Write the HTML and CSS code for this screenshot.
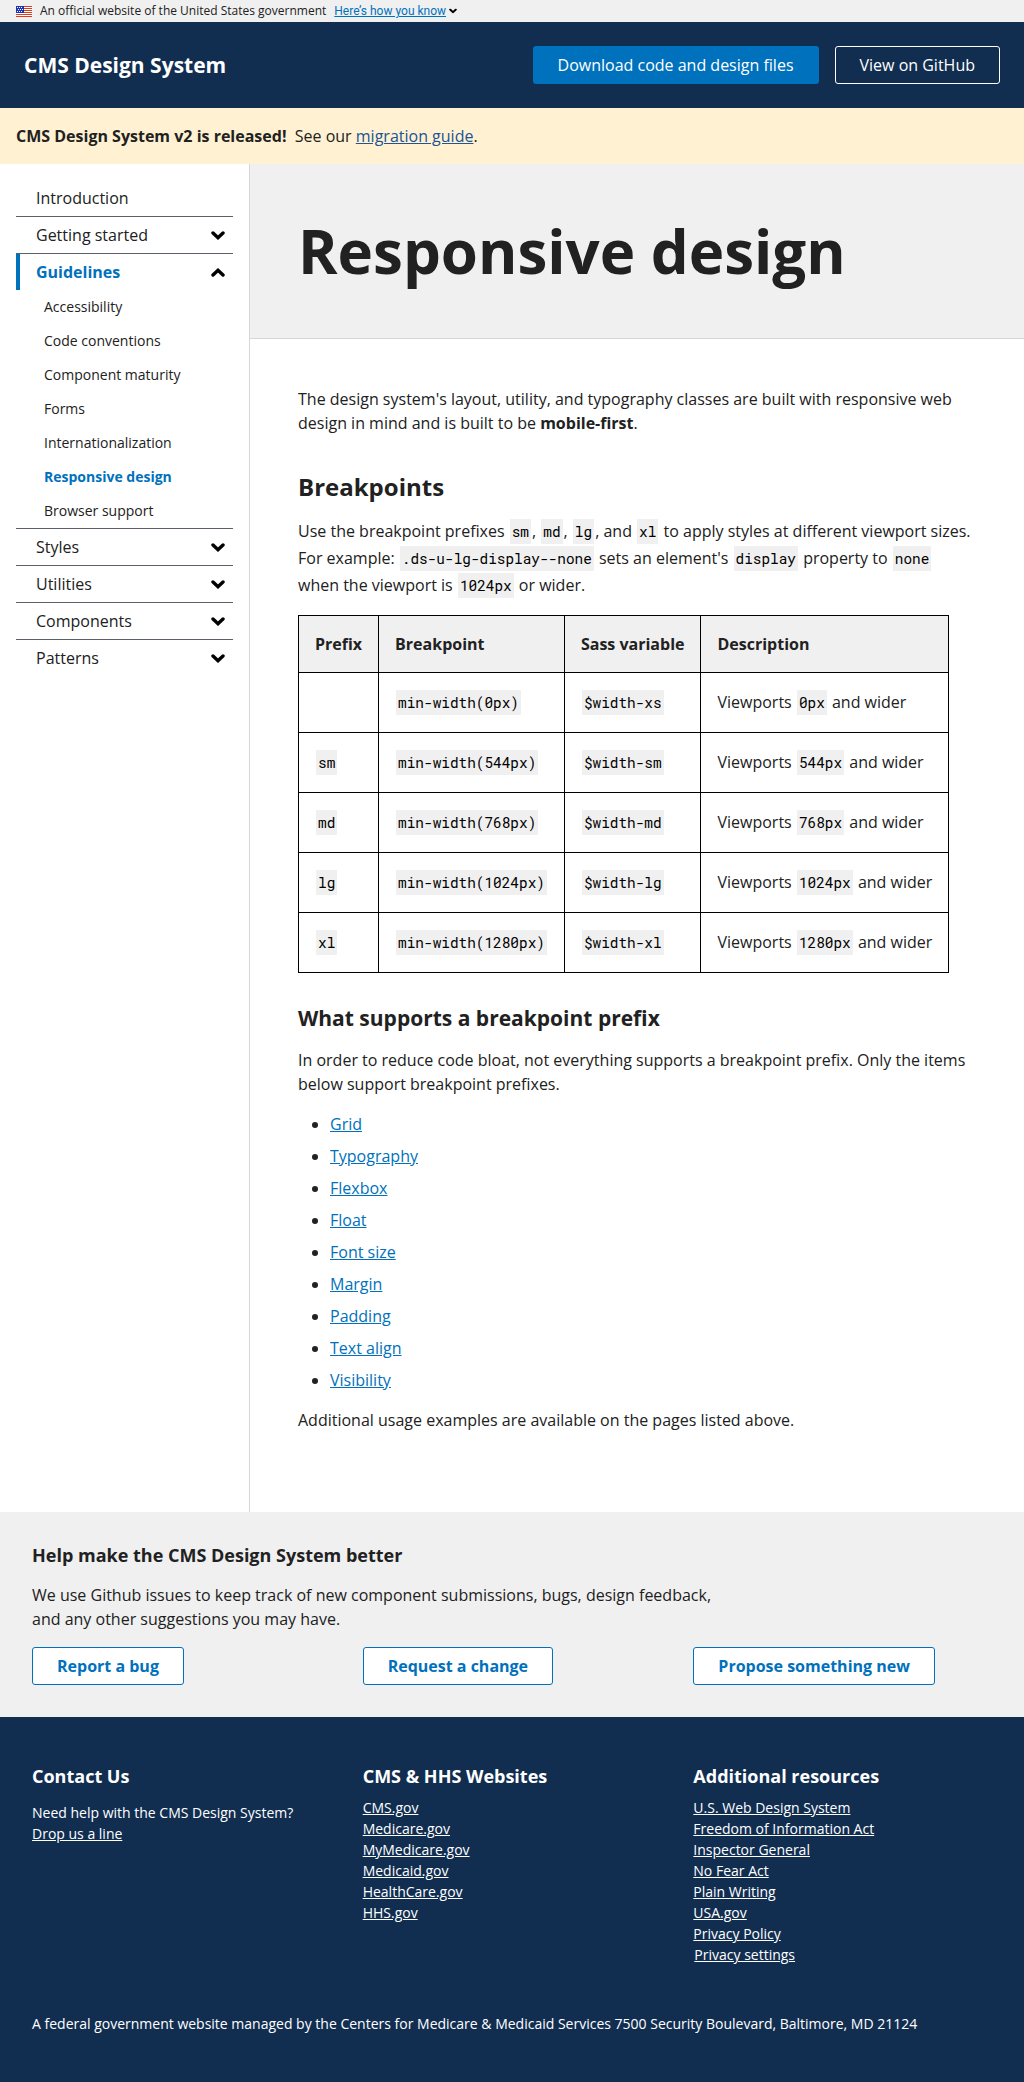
FILE: index.html
```html
<!DOCTYPE html>
<html lang="en">
<head>
  <meta charset="utf-8">
  <meta name="viewport" content="width=device-width, initial-scale=1">
  <title>Responsive design - CMS Design System</title>
  <link rel="stylesheet" href="styles.css">
</head>
<body>
  <svg class="sprite" aria-hidden="true">
    <symbol id="chevron" viewBox="0 0 14 9">
      <path d="M2 2l5 4.700L12 2" fill="none" stroke="#000" stroke-width="3.400" stroke-linecap="round"/>
    </symbol>
  </svg>

  <div class="usa-banner">
    <svg class="flag" viewBox="0 0 16 11" role="img" aria-label="U.S. flag">
      <rect width="16" height="11" fill="#fff"/>
      <path d="M0 .5h16M0 2.500h16M0 4.500h16M0 6.500h16M0 8.500h16M0 10.500h16" stroke="#db3e1f" stroke-width="1"/>
      <rect width="8" height="7" fill="#1e33b1"/>
      <path d="M1 1.500h1M3 1.500h1M5 1.500h1M2 3.500h1M4 3.500h1M6 3.500h1M1 5.500h1M3 5.500h1M5 5.500h1" stroke="#fff" stroke-width="1"/>
    </svg>
    <span>An official website of the United States government</span>
    <button type="button" class="banner-toggle"><span class="banner-link">Here’s how you know</span><svg class="banner-chevron" viewBox="0 0 14 9" aria-hidden="true"><use href="#chevron"/></svg></button>
  </div>

  <header class="site-header">
    <a class="site-name" href="#">CMS Design System</a>
    <div class="header-actions">
      <a class="button button-primary" href="#">Download code and design files</a>
      <a class="button button-inverse" href="#">View on GitHub</a>
    </div>
  </header>

  <div class="release-note">
    <strong>CMS Design System v2 is released!</strong>&nbsp; See our <a href="#">migration guide</a>.
  </div>

  <div class="page">
    <nav class="sidebar" aria-label="Main">
      <ul class="nav">
        <li class="nav-item"><a class="nav-label" href="#">Introduction</a></li>
        <li class="nav-item"><button type="button" class="nav-label" aria-expanded="false">Getting started<svg class="chevron" viewBox="0 0 14 9" aria-hidden="true"><use href="#chevron"/></svg></button></li>
        <li class="nav-item">
          <button type="button" class="nav-label nav-label-current" aria-expanded="true">Guidelines<svg class="chevron chevron-up" viewBox="0 0 14 9" aria-hidden="true"><use href="#chevron"/></svg></button>
          <ul class="subnav">
            <li><a href="#">Accessibility</a></li>
            <li><a href="#">Code conventions</a></li>
            <li><a href="#">Component maturity</a></li>
            <li><a href="#">Forms</a></li>
            <li><a href="#">Internationalization</a></li>
            <li><a class="subnav-current" href="#" aria-current="page">Responsive design</a></li>
            <li><a href="#">Browser support</a></li>
          </ul>
        </li>
        <li class="nav-item"><button type="button" class="nav-label" aria-expanded="false">Styles<svg class="chevron" viewBox="0 0 14 9" aria-hidden="true"><use href="#chevron"/></svg></button></li>
        <li class="nav-item"><button type="button" class="nav-label" aria-expanded="false">Utilities<svg class="chevron" viewBox="0 0 14 9" aria-hidden="true"><use href="#chevron"/></svg></button></li>
        <li class="nav-item"><button type="button" class="nav-label" aria-expanded="false">Components<svg class="chevron" viewBox="0 0 14 9" aria-hidden="true"><use href="#chevron"/></svg></button></li>
        <li class="nav-item"><button type="button" class="nav-label" aria-expanded="false">Patterns<svg class="chevron" viewBox="0 0 14 9" aria-hidden="true"><use href="#chevron"/></svg></button></li>
      </ul>
    </nav>

    <main class="main">
      <div class="page-header">
        <h1>Responsive design</h1>
      </div>
      <div class="content">
        <p>The design system's layout, utility, and typography classes are built with responsive web design in mind and is built to be <strong>mobile-first</strong>.</p>

        <h2>Breakpoints</h2>
        <p class="with-code">Use the breakpoint prefixes <code>sm</code>, <code>md</code>, <code>lg</code>, and <code>xl</code> to apply styles at different viewport sizes. For example: <code>.ds-u-lg-display--none</code> sets an element's <code>display</code> property to <code>none</code> when the viewport is <code>1024px</code> or wider.</p>

        <table class="breakpoints">
          <thead>
            <tr>
              <th scope="col">Prefix</th>
              <th scope="col">Breakpoint</th>
              <th scope="col">Sass variable</th>
              <th scope="col">Description</th>
            </tr>
          </thead>
          <tbody>
            <tr><td></td><td><code>min-width(0px)</code></td><td><code>$width-xs</code></td><td>Viewports <code>0px</code> and wider</td></tr>
            <tr><td><code>sm</code></td><td><code>min-width(544px)</code></td><td><code>$width-sm</code></td><td>Viewports <code>544px</code> and wider</td></tr>
            <tr><td><code>md</code></td><td><code>min-width(768px)</code></td><td><code>$width-md</code></td><td>Viewports <code>768px</code> and wider</td></tr>
            <tr><td><code>lg</code></td><td><code>min-width(1024px)</code></td><td><code>$width-lg</code></td><td>Viewports <code>1024px</code> and wider</td></tr>
            <tr><td><code>xl</code></td><td><code>min-width(1280px)</code></td><td><code>$width-xl</code></td><td>Viewports <code>1280px</code> and wider</td></tr>
          </tbody>
        </table>

        <h3>What supports a breakpoint prefix</h3>
        <p>In order to reduce code bloat, not everything supports a breakpoint prefix. Only the items below support breakpoint prefixes.</p>
        <ul class="link-list">
          <li><a href="#">Grid</a></li>
          <li><a href="#">Typography</a></li>
          <li><a href="#">Flexbox</a></li>
          <li><a href="#">Float</a></li>
          <li><a href="#">Font size</a></li>
          <li><a href="#">Margin</a></li>
          <li><a href="#">Padding</a></li>
          <li><a href="#">Text align</a></li>
          <li><a href="#">Visibility</a></li>
        </ul>
        <p>Additional usage examples are available on the pages listed above.</p>
      </div>
    </main>
  </div>

  <section class="feedback">
    <h4>Help make the CMS Design System better</h4>
    <p class="feedback-text">We use Github issues to keep track of new component submissions, bugs, design feedback, and any other suggestions you may have.</p>
    <div class="columns">
      <div><a class="button button-outline" href="#">Report a bug</a></div>
      <div><a class="button button-outline" href="#">Request a change</a></div>
      <div><a class="button button-outline" href="#">Propose something new</a></div>
    </div>
  </section>

  <footer class="site-footer">
    <div class="columns">
      <div>
        <h4>Contact Us</h4>
        <p class="contact">Need help with the CMS Design System?<br><a href="#">Drop us a line</a></p>
      </div>
      <div>
        <h4>CMS &amp; HHS Websites</h4>
        <ul class="footer-links">
          <li><a href="#">CMS.gov</a></li>
          <li><a href="#">Medicare.gov</a></li>
          <li><a href="#">MyMedicare.gov</a></li>
          <li><a href="#">Medicaid.gov</a></li>
          <li><a href="#">HealthCare.gov</a></li>
          <li><a href="#">HHS.gov</a></li>
        </ul>
      </div>
      <div>
        <h4>Additional resources</h4>
        <ul class="footer-links">
          <li><a href="#">U.S. Web Design System</a></li>
          <li><a href="#">Freedom of Information Act</a></li>
          <li><a href="#">Inspector General</a></li>
          <li><a href="#">No Fear Act</a></li>
          <li><a href="#">Plain Writing</a></li>
          <li><a href="#">USA.gov</a></li>
          <li><a href="#">Privacy Policy</a></li>
          <li><button type="button" class="privacy-settings">Privacy settings</button></li>
        </ul>
      </div>
    </div>
    <p class="address">A federal government website managed by the Centers for Medicare &amp; Medicaid Services 7500 Security Boulevard, Baltimore, MD 21124</p>
  </footer>
</body>
</html>
```
FILE: styles.css
```css
*,
*::before,
*::after {
  box-sizing: border-box;
}

body {
  margin: 0;
  background: #fff;
  color: #212121;
  font-family: "Open Sans", "Noto Sans", sans-serif;
  font-size: 16px;
  line-height: 24px;
}

h1, h2, h3, h4, p, ul {
  margin: 0;
  padding: 0;
}

ul {
  list-style: none;
}

a {
  color: #0071bc;
}

button {
  border: 0;
  padding: 0;
  background: none;
  color: inherit;
  font: inherit;
  cursor: pointer;
}

code {
  padding: 3px 2px;
  margin: 0 1px;
  background: #f0f0f0;
  color: #000;
  font-family: "Roboto Mono", "Liberation Mono", monospace;
  font-size: 90%;
}

.sprite {
  display: none;
}

/* Government banner */
.usa-banner {
  display: flex;
  align-items: center;
  gap: 8px;
  padding: 2px 16px;
  background: #f0f0f0;
  font-size: 12px;
  line-height: 18px;
}

.flag {
  flex: none;
  width: 16px;
  height: 11px;
}

.banner-toggle {
  display: flex;
  align-items: center;
  gap: 3px;
  font-family: Roboto, "Liberation Sans", sans-serif;
}

.banner-link {
  color: #0071bc;
  text-decoration: underline;
}

.banner-chevron {
  width: 8px;
  height: 6px;
}

/* Site header */
.site-header {
  display: flex;
  align-items: center;
  justify-content: space-between;
  padding: 24px;
  background: #112e51;
}

.site-name {
  color: #fff;
  font-size: 21px;
  font-weight: 700;
  line-height: 28px;
  text-decoration: none;
}

.header-actions {
  display: flex;
  gap: 16px;
}

.button {
  display: inline-block;
  padding: 8px 24px;
  border: 1px solid transparent;
  border-radius: 3px;
  line-height: 20px;
  text-decoration: none;
  vertical-align: top;
}

.button-primary {
  background: #0071bc;
  color: #fff;
}

.button-inverse {
  border-color: #fff;
  color: #fff;
}

.button-outline {
  border-color: #0071bc;
  background: #fff;
  color: #0071bc;
  font-weight: 700;
}

.release-note {
  padding: 16px;
  background: #fff1d2;
}

.release-note a {
  color: #205493;
}

/* Page frame */
.page {
  display: flex;
}

.sidebar {
  flex: none;
  width: 250px;
  padding: 16px;
  border-right: 1px solid #d6d7d9;
}

.nav-item + .nav-item {
  border-top: 1px solid #5b616b;
}

.nav-label {
  display: flex;
  align-items: center;
  justify-content: space-between;
  width: 100%;
  padding: 6px 8px 6px 20px;
  color: #212121;
  line-height: 24px;
  text-decoration: none;
}

.nav-label-current {
  padding-left: 16px;
  border-left: 4px solid #0071bc;
  color: #0071bc;
  font-weight: 700;
}

.chevron {
  width: 14px;
  height: 9px;
}

.chevron-up {
  transform: rotate(180deg);
}

.subnav a {
  display: block;
  padding-left: 28px;
  color: #212121;
  font-size: 14px;
  line-height: 34px;
  text-decoration: none;
}

.subnav .subnav-current {
  color: #0071bc;
  font-weight: 700;
}

.main {
  flex: 1;
  min-width: 0;
}

.page-header {
  padding: 48px;
  border-bottom: 1px solid #d6d7d9;
  background: #f0f0f0;
}

h1 {
  font-size: 60px;
  line-height: 78px;
}

.content {
  padding: 48px 48px 80px;
}

.content p {
  max-width: 674px;
}

h2 {
  margin: 36px 0 16px;
  font-size: 24px;
  line-height: 31px;
}

h3 {
  margin: 32px 0 16px;
  font-size: 21px;
  line-height: 27px;
}

h4 {
  font-size: 18px;
  line-height: 23px;
}

.with-code {
  line-height: 27px;
}

.breakpoints {
  margin-top: 16px;
  border-collapse: collapse;
}

.breakpoints th,
.breakpoints td {
  padding: 16px;
  border: 1px solid #000;
  text-align: left;
  white-space: nowrap;
}

.breakpoints th {
  background: #f0f0f0;
}

.breakpoints td {
  height: 60px;
  line-height: 27px;
}

.link-list {
  display: grid;
  gap: 8px;
  margin: 16px 0;
  padding-left: 32px;
  list-style: disc;
}

/* Feedback and footer */
.columns {
  display: grid;
  grid-template-columns: repeat(3, 1fr);
  gap: 32px;
}

.feedback {
  padding: 32px;
  background: #f0f0f0;
}

.feedback-text {
  max-width: 700px;
  margin: 16px 0;
}

.site-footer {
  padding: 48px 32px;
  background: #112e51;
  color: #fff;
  font-size: 14px;
  line-height: 21px;
}

.site-footer a {
  color: #fff;
}

.contact {
  margin-top: 14px;
}

.footer-links {
  margin-top: 9px;
}

.privacy-settings {
  display: block;
  padding: 0 1px;
  text-decoration: underline;
}

.address {
  margin-top: 48px;
}
```
